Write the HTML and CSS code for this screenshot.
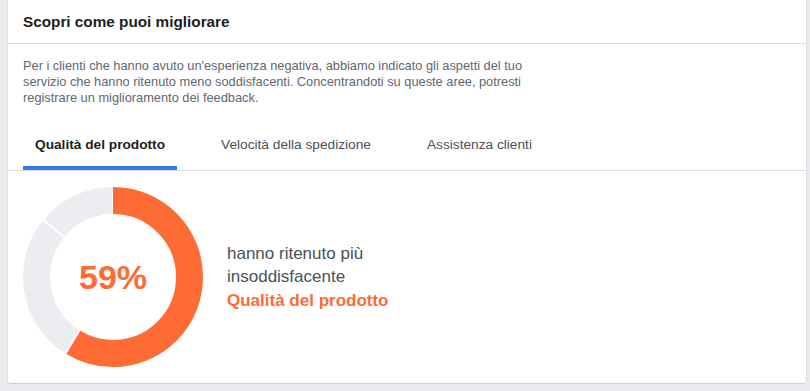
FILE: index.html
```html
<!DOCTYPE html>
<html lang="it">
<head>
    <meta charset="UTF-8">
    <meta name="viewport" content="width=device-width, initial-scale=1.0">
    <title>Scopri come puoi migliorare</title>
    <link rel="stylesheet" href="styles.css">
</head>
<body>

    <div class="card">
        <div class="card-header">Scopri come puoi migliorare</div>

        <p class="card-intro">Per i clienti che hanno avuto un'esperienza negativa, abbiamo indicato gli aspetti del tuo servizio che hanno ritenuto meno soddisfacenti. Concentrandoti su queste aree, potresti registrare un miglioramento dei feedback.</p>

        <div class="tabs">
            <div class="tab active">Qualità del prodotto</div>
            <div class="tab">Velocità della spedizione</div>
            <div class="tab">Assistenza clienti</div>
        </div>

        <div class="result">
            <div class="donut-wrap">
                <svg class="donut" width="180" height="180" viewBox="0 0 180 180">
                    <g transform="rotate(-90 90 90)" fill="none" stroke-width="27">
                        <!-- circumference 480.66, each dash leaves a 2px gap -->
                        <circle cx="90" cy="90" r="76.5" stroke="#ff6b35" stroke-dasharray="281.6 480.66" stroke-dashoffset="0"></circle>
                        <circle cx="90" cy="90" r="76.5" stroke="#ebedf0" stroke-dasharray="127.8 480.66" stroke-dashoffset="-283.59"></circle>
                        <circle cx="90" cy="90" r="76.5" stroke="#ebedf0" stroke-dasharray="65.3 480.66" stroke-dashoffset="-413.37"></circle>
                    </g>
                </svg>
                <div class="donut-value">59%</div>
            </div>
            <div class="result-text">
                <div class="result-label">hanno ritenuto più insoddisfacente</div>
                <div class="result-topic">Qualità del prodotto</div>
            </div>
        </div>
    </div>

</body>
</html>
```

FILE: styles.css
```css
body {
    font-family: "Liberation Sans", Arial, sans-serif;
    margin: 0;
    padding: 0;
    background-color: #e9ebee;
}

.card {
    box-sizing: border-box;
    width: 800px;
    height: 384px;
    margin-left: 7px;
    background-color: #fff;
    border: 1px solid #dddfe2;
    border-top: 0;
    border-bottom-color: #ccd0d5;
    border-radius: 0 0 4px 4px;
}

.card-header {
    height: 43px;
    line-height: 43px;
    padding: 0 15px;
    font-size: 15.3px;
    font-weight: bold;
    color: #1c1e21;
    border-bottom: 1px solid #dadde1;
}

.card-intro {
    margin: 0;
    padding: 14px 15px 0;
    max-width: 525px;
    font-size: 12.8px;
    line-height: 16px;
    color: #606770;
}

.tabs {
    display: flex;
    gap: 32px;
    margin-top: 17px;
    padding: 0 15px;
    border-bottom: 1px solid #dadde1;
}

.tab {
    box-sizing: border-box;
    height: 47px;
    line-height: 43px;
    padding: 0 12px;
    font-size: 13.7px;
    color: #4b4f56;
    border-bottom: 4px solid transparent;
    white-space: nowrap;
}

.tab.active {
    font-weight: bold;
    color: #1c1e21;
    border-bottom-color: #3578e5;
}

.result {
    display: flex;
    align-items: center;
    gap: 24px;
    padding: 16px 15px;
}

.donut-wrap {
    display: grid;
    width: 180px;
    height: 180px;
}

.donut,
.donut-value {
    grid-area: 1 / 1;
}

.donut {
    display: block;
}

.donut-value {
    place-self: center;
    font-size: 34px;
    font-weight: bold;
    color: #ff6b35;
}

.result-text {
    font-size: 17px;
    line-height: 23.5px;
    color: #4b4f56;
}

.result-label {
    max-width: 160px;
}

.result-topic {
    font-weight: bold;
    color: #ff6b35;
    white-space: nowrap;
}
```
